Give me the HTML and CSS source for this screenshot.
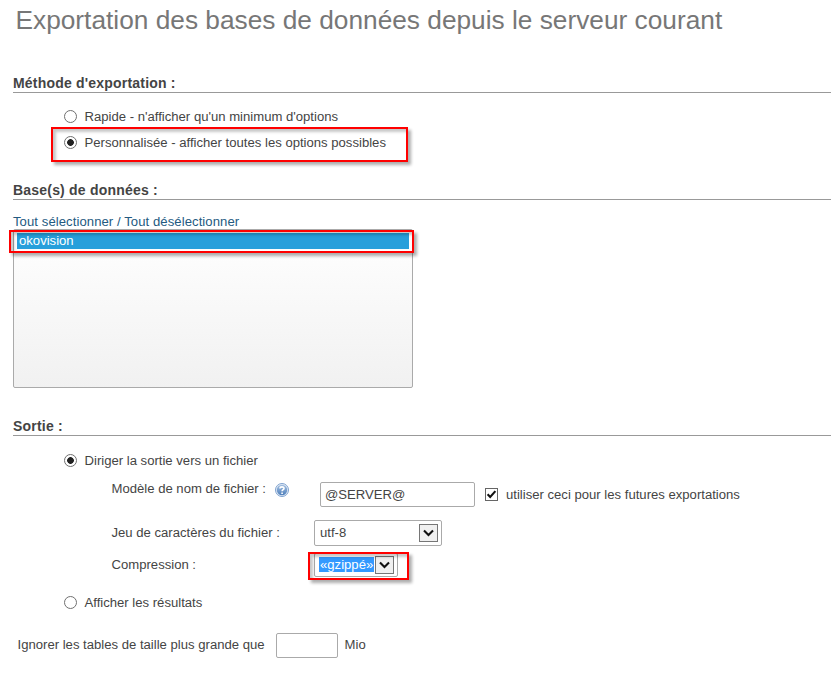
FILE: index.html
```html
<!DOCTYPE html>
<html lang="fr">
<head>
<meta charset="utf-8">
<title>Exportation</title>
<link rel="stylesheet" href="styles.css">
</head>
<body>
<h1>Exportation des bases de données depuis le serveur courant</h1>
<main>
  <section class="method">
    <h3>Méthode d'exportation :</h3>
    <label class="choice"><span class="radio"></span><span>Rapide - n'afficher qu'un minimum d'options</span></label>
    <label class="choice"><span class="radio on"></span><span>Personnalisée - afficher toutes les options possibles</span><span class="mark mark-method"></span></label>
  </section>
  <section class="databases">
    <h3>Base(s) de données :</h3>
    <p class="links"><a>Tout sélectionner</a> / <a>Tout désélectionner</a></p>
    <div class="list"><div class="option">okovision</div><span class="mark mark-db"></span></div>
  </section>
  <section class="output">
    <h3>Sortie :</h3>
    <label class="choice"><span class="radio on"></span><span>Diriger la sortie vers un fichier</span></label>
    <div class="row row-name">
      <span class="name-label">Modèle de nom de fichier :</span>
      <svg class="help" width="14" height="14" viewBox="0 0 14 14">
        <defs><linearGradient id="g" x1="0" y1="0" x2="0" y2="1"><stop offset="0" stop-color="#a3bfe0"/><stop offset="1" stop-color="#4f80bc"/></linearGradient></defs>
        <circle cx="7" cy="7" r="6.5" fill="#e3ebf5" stroke="#7fa2cf"/>
        <circle cx="7" cy="7" r="5.2" fill="url(#g)"/>
        <path d="M5 5.4C5 3.4 9 3.3 9 5.4C9 6.7 7.1 6.8 7.1 8.3M7.1 9.5V10.9" fill="none" stroke="#fff" stroke-width="1.6"/>
      </svg>
      <div class="input name">@SERVER@</div>
      <svg class="check" width="13" height="13" viewBox="0 0 13 13"><rect x=".5" y=".5" width="12" height="12" fill="#fff" stroke="#666"/><path d="M2.6 6.3L5.2 9L10.4 3.1" fill="none" stroke="#111" stroke-width="2.1"/></svg>
      <span>utiliser ceci pour les futures exportations</span>
    </div>
    <div class="row row-charset">
      <span class="label">Jeu de caractères du fichier :</span>
      <div class="select charset"><span>utf-8</span><span class="arrow"><svg width="11" height="8" viewBox="0 0 11 8"><path d="M1 1.5L5.5 6L10 1.5" fill="none" stroke="#111" stroke-width="2.1"/></svg></span></div>
    </div>
    <div class="row row-comp">
      <span class="label">Compression :</span>
      <div class="select comp"><span class="selected">«gzippé»</span><span class="arrow"><svg width="11" height="8" viewBox="0 0 11 8"><path d="M1 1.5L5.5 6L10 1.5" fill="none" stroke="#111" stroke-width="2.1"/></svg></span><span class="mark mark-comp"></span></div>
    </div>
    <label class="choice show"><span class="radio"></span><span>Afficher les résultats</span></label>
    <div class="row row-skip"><span>Ignorer les tables de taille plus grande que</span><div class="input size"></div><span>Mio</span></div>
  </section>
</main>
</body>
</html>
```
FILE: styles.css
```css
* { box-sizing: border-box; }
body { margin: 0; height: 682px; overflow: hidden; background: #fff; color: #444; font: 13.12px/26px "Liberation Sans", Arial, sans-serif; white-space: nowrap; }
h1 { margin: 0; padding-left: 15.5px; height: 73px; font-size: 26.27px; line-height: 40px; font-weight: normal; color: #777; }
main { padding-left: 13px; }
h3 { margin: 0 0 10px; height: 20px; border-bottom: 1px solid #999; font-size: 14px; line-height: 21px; letter-spacing: .2px; }
.method { height: 107px; }
.choice { position: relative; display: flex; align-items: center; height: 26px; padding-left: 51px; gap: 7.5px; }
.choice > span:nth-child(2) { padding-top: 1px; }
.radio { width: 13px; height: 13px; border: 1px solid #707070; border-radius: 50%; background: #fff; }
.radio.on { background: radial-gradient(circle, #222 3px, #fff 3.7px); }
.mark { position: absolute; border: 2px solid #f00; box-shadow: 3px 3px 3px rgba(0,0,0,.32), inset 3px 3px 3px rgba(0,0,0,.22); }
.mark-method { left: 38px; top: -2px; width: 357px; height: 35px; }
.databases { height: 236px; }
.databases h3 { margin-bottom: 12px; }
.links { margin: 0; height: 17px; line-height: 20px; letter-spacing: .07px; color: #235a81; }
.list { position: relative; width: 400px; height: 159px; padding: 3px; border: 1px solid #aaa; border-radius: 2px; background: linear-gradient(#fff, #f1f1f1); }
.option { height: 16px; padding-left: 2px; background: #279fdb; color: #fff; line-height: 15px; }
.mark-db { left: -5px; top: 0; width: 405px; height: 23px; }
.output h3 { margin-bottom: 11px; }
.row { display: flex; align-items: center; }
.input, .select { border: 1px solid #aaa; border-radius: 2px; background: #fff; }
.row-name { height: 43px; padding-left: 98.5px; }
.name-label { width: 163.5px; padding-bottom: 12px; }
.help { margin: 0 31px 9px 0; }
.name { width: 155px; height: 25px; padding-left: 4px; line-height: 23px; }
.check { margin: 0 8px 0 10px; }
.row-charset { height: 33px; padding-left: 98.5px; }
.label { width: 202.5px; }
.select { position: relative; display: flex; align-items: center; justify-content: space-between; padding: 0 3px 0 5px; }
.charset { width: 128px; height: 26px; }
.comp { width: 84px; height: 24px; padding-left: 4px; }
.arrow { display: flex; align-items: center; justify-content: center; width: 19px; height: 18px; border: 1px solid #767676; background: #f0f0f0; }
.selected { width: 55px; height: 15px; padding-left: 1px; background: #3399ff; color: #fff; line-height: 15px; }
.row-comp { height: 31px; padding-left: 98.5px; }
.mark-comp { left: -7px; top: -2px; width: 101px; height: 28px; }
.show { margin-top: 9px; }
.row-skip { margin-top: 17px; padding-left: 4.5px; }
.size { width: 62px; height: 25px; margin: 0 6.5px 0 11.5px; }
```
